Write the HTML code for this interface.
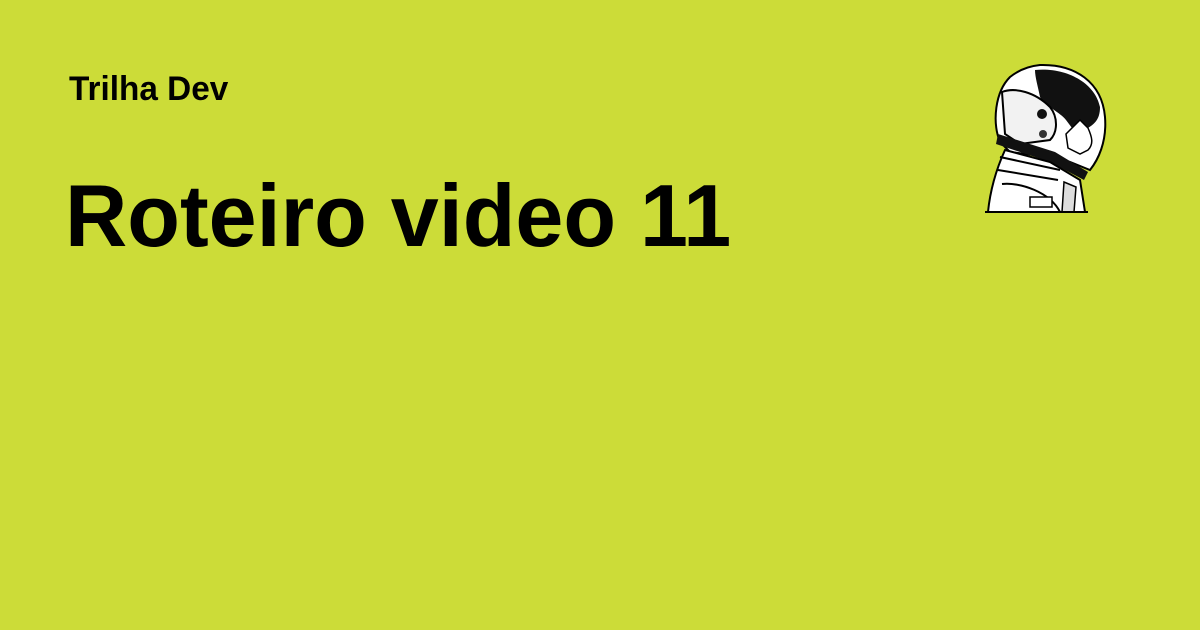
<!DOCTYPE html>
<html><head><style>
html,body{margin:0;padding:0}
body{width:1200px;height:630px;background:#CCDC38;position:relative;overflow:hidden;font-family:"Liberation Sans",Arial,sans-serif;color:#000}
.s{position:absolute;left:69px;top:70px;font-size:34px;font-weight:bold;white-space:nowrap;transform:scaleX(0.98);transform-origin:left top}
.t{position:absolute;left:65px;top:165px;font-size:88px;font-weight:bold;white-space:nowrap;transform:scaleX(0.98);transform-origin:left top}
svg{position:absolute;left:980px;top:62px}
</style></head><body>
<div class="s">Trilha Dev</div>
<div class="t">Roteiro video 11</div>
<svg width="130" height="155" viewBox="0 0 130 155">
<path d="M60 3 C95 2 122 20 125 55 C127 80 118 98 110 108 L90 100 L70 95 L30 90 L20 80 C12 60 15 30 30 15 C40 7 50 4 60 3Z" fill="#fff" stroke="#000" stroke-width="2"/>
<path d="M55 8 C85 5 115 20 120 45 C120 58 114 62 108 66 L100 58 L92 66 L86 58 C80 50 66 45 60 35 C58 25 55 15 55 8Z" fill="#111"/>
<path d="M92 66 L100 58 L108 66 C112 75 114 82 108 88 L100 92 L88 86 L86 72Z" fill="#fff" stroke="#000" stroke-width="1.5"/>
<path d="M22 30 C35 25 55 30 70 45 C78 55 78 70 70 78 L40 82 L25 72 Z" fill="#f2f2f2" stroke="#000" stroke-width="2"/>
<circle cx="62" cy="52" r="5" fill="#111"/>
<circle cx="63" cy="72" r="4" fill="#333"/>
<path d="M18 72 L75 90 L108 110 L104 118 L70 100 L16 82Z" fill="#111"/>
<path d="M25 88 L70 100 L100 118 L105 150 L8 150 C10 130 15 110 25 88Z" fill="#fff" stroke="#000" stroke-width="2"/>
<path d="M20 95 L80 108 M18 108 L78 118 M22 122 C40 120 70 130 80 150" stroke="#000" stroke-width="2" fill="none"/>
<rect x="50" y="135" width="22" height="10" fill="#fff" stroke="#000" stroke-width="1.5"/>
<path d="M84 120 L96 125 L94 150 L82 150Z" fill="#ddd" stroke="#000" stroke-width="1.5"/>
<path d="M5 150 L108 150" stroke="#000" stroke-width="2"/>
</svg>
</body></html>
